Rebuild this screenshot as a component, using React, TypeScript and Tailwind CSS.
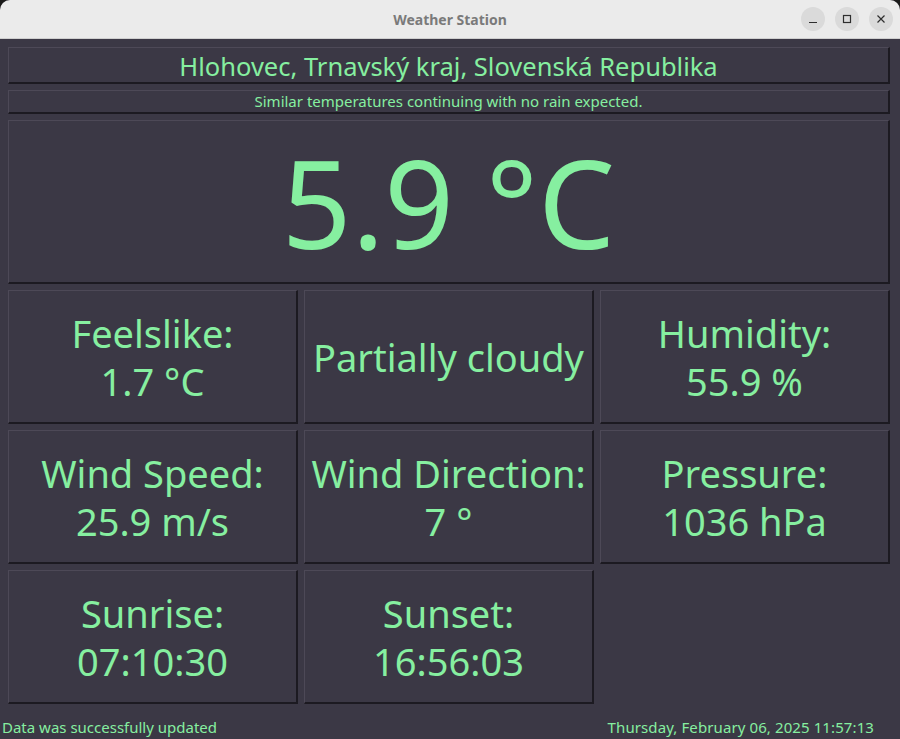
import React from 'react';

const panel = 'bg-[#3b3845] border-t border-l border-t-[#4d4957] border-l-[#4d4957] border-b-2 border-r-2 border-b-[#1c1a21] border-r-[#1c1a21] flex items-center justify-center text-center';

const cells: { label?: string; value?: string }[] = [
  { label: 'Feelslike:', value: '1.7 °C' },
  { label: 'Partially cloudy' },
  { label: 'Humidity:', value: '55.9 %' },
  { label: 'Wind Speed:', value: '25.9 m/s' },
  { label: 'Wind Direction:', value: '7 °' },
  { label: 'Pressure:', value: '1036 hPa' },
  { label: 'Sunrise:', value: '07:10:30' },
  { label: 'Sunset:', value: '16:56:03' },
];

export default function App() {
  return (
    <div className="w-[900px] h-[739px] bg-[#1a1a1a] overflow-hidden" style={{ fontFamily: '"Noto Sans", "DejaVu Sans", sans-serif' }}>
      <div className="h-full flex flex-col rounded-t-[10px] overflow-hidden bg-[#3b3845]">
        {/* title bar */}
        <div className="h-[39px] shrink-0 bg-[#ebebeb] border-b border-[#cfcfcf] relative flex items-center justify-center">
          <span className="text-[14px] font-bold text-[#7a7a7a]">Weather Station</span>
          <div className="absolute right-[7px] top-[7px] flex gap-[10px]">
            <button className="w-6 h-6 rounded-full bg-[#dadada] flex items-center justify-center">
              <svg width="10" height="10" viewBox="0 0 10 10"><path d="M1 8.5h8" stroke="#2e2e2e" strokeWidth="1.2" /></svg>
            </button>
            <button className="w-6 h-6 rounded-full bg-[#dadada] flex items-center justify-center">
              <svg width="10" height="10" viewBox="0 0 10 10"><rect x="1.5" y="1.5" width="7" height="7" fill="none" stroke="#2e2e2e" strokeWidth="1.2" /></svg>
            </button>
            <button className="w-6 h-6 rounded-full bg-[#dadada] flex items-center justify-center">
              <svg width="10" height="10" viewBox="0 0 10 10"><path d="M1.5 1.5l7 7M8.5 1.5l-7 7" stroke="#2e2e2e" strokeWidth="1.2" /></svg>
            </button>
          </div>
        </div>

        <div className="flex-1 flex flex-col pl-2 pr-[10px] pt-2 gap-[6px] text-[#86efa0]">
          <div className={`${panel} h-[37px] text-[25.5px] pt-[3px]`}>Hlohovec, Trnavský kraj, Slovenská Republika</div>
          <div className={`${panel} h-[24px] text-[15px]`}>Similar temperatures continuing with no rain expected.</div>
          <div className={`${panel} h-[164px] text-[122px] leading-none`}>5.9 °C</div>
          <div className="grid grid-cols-3 gap-[6px] auto-rows-[134px]">
            {cells.map((c) => (
              <div key={c.label} className={`${panel} flex-col text-[38px] leading-[48px]`}>
                <span>{c.label}</span>
                {c.value && <span>{c.value}</span>}
              </div>
            ))}
          </div>
          <div className="flex justify-between items-center mt-auto h-[34px] pl-0 pr-4 -ml-[6px] text-[15px]">
            <span>Data was successfully updated</span>
            <span className="tracking-[0.1px]">Thursday, February 06, 2025 11:57:13</span>
          </div>
        </div>
      </div>
    </div>
  );
}
